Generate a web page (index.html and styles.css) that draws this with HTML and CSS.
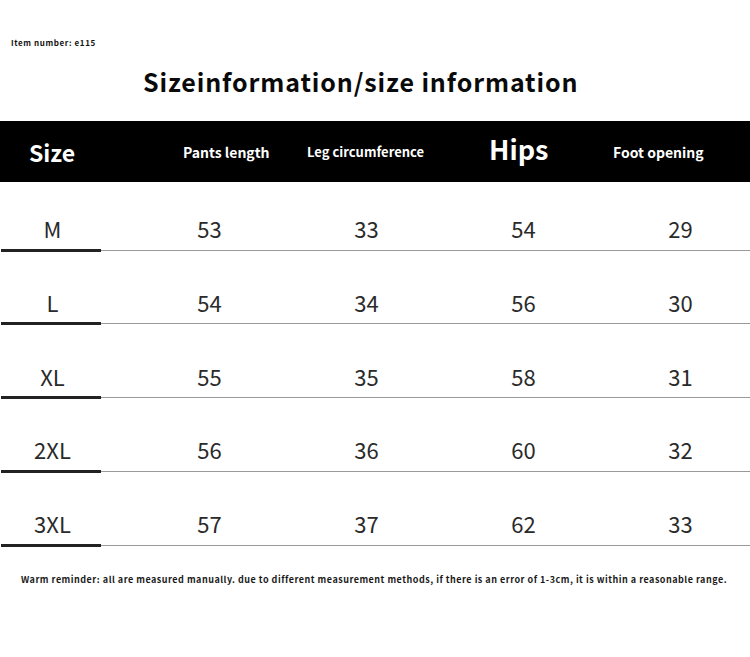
FILE: index.html
```html
<!DOCTYPE html>
<html lang="en">
<head>
<meta charset="utf-8">
<title>Size information</title>
<link rel="stylesheet" href="styles.css">
</head>
<body>
<div class="page">
  <div class="item">Item number: e115</div>
  <h1 class="title">Sizeinformation/size information</h1>
  <div class="band">
    <div class="hcell h-size">Size</div>
    <div class="hcell h-pants">Pants length</div>
    <div class="hcell h-leg">Leg circumference</div>
    <div class="hcell h-hips">Hips</div>
    <div class="hcell h-foot">Foot opening</div>
  </div>
  <div class="rows">
    <div class="row">
      <div class="cells"><span class="c c1">M</span><span class="c">53</span><span class="c">33</span><span class="c">54</span><span class="c">29</span></div>
      <div class="rule"><span class="thick"></span><span class="thin"></span></div>
    </div>
    <div class="row">
      <div class="cells"><span class="c c1">L</span><span class="c">54</span><span class="c">34</span><span class="c">56</span><span class="c">30</span></div>
      <div class="rule"><span class="thick"></span><span class="thin"></span></div>
    </div>
    <div class="row">
      <div class="cells"><span class="c c1">XL</span><span class="c">55</span><span class="c">35</span><span class="c">58</span><span class="c">31</span></div>
      <div class="rule"><span class="thick"></span><span class="thin"></span></div>
    </div>
    <div class="row">
      <div class="cells"><span class="c c1">2XL</span><span class="c">56</span><span class="c">36</span><span class="c">60</span><span class="c">32</span></div>
      <div class="rule"><span class="thick"></span><span class="thin"></span></div>
    </div>
    <div class="row">
      <div class="cells"><span class="c c1">3XL</span><span class="c">57</span><span class="c">37</span><span class="c">62</span><span class="c">33</span></div>
      <div class="rule"><span class="thick"></span><span class="thin"></span></div>
    </div>
  </div>
  <p class="note">Warm reminder: all are measured manually. due to different measurement methods, if there is an error of 1-3cm, it is within a reasonable range.</p>
</div>
</body>
</html>
```

FILE: styles.css
```css
* { box-sizing: border-box; }
html, body { margin: 0; padding: 0; background: #fff; }
body {
  font-family: "Noto Sans CJK SC", "Noto Sans", sans-serif;
  color: #111;
}
.page { width: 750px; }

.item {
  margin: 37px 0 0 11px;
  height: 12px;
  line-height: 12px;
  font-size: 8px;
  letter-spacing: 0.6px;
  font-weight: 700;
  color: #111;
}

.title {
  margin: 15px 0 0 143px;
  height: 34px;
  line-height: 34px;
  font-size: 25px;
  letter-spacing: 0.88px;
  font-weight: 700;
  color: #0a0a0a;
  white-space: nowrap;
}

.band {
  margin-top: 23px;
  height: 61px;
  background: #000;
  color: #fff;
  display: flex;
  align-items: center;
  padding-left: 29px;
  font-weight: 700;
}
.hcell { white-space: nowrap; line-height: 30px; }
.h-size { width: 154px; font-size: 23px; }
.h-pants { width: 124px; font-size: 14px; }
.h-leg { width: 182px; font-size: 13px; }
.h-hips { width: 124px; font-size: 27px; margin-bottom: 5px; }
.h-foot { font-size: 14px; }

.row { padding-top: 35.25px; }
.row:first-child { padding-top: 31px; }

.cells {
  display: grid;
  grid-template-columns: 131px repeat(4, 157px);
  height: 30px;
  line-height: 30px;
  font-size: 22px;
  color: #2a2a2a;
  margin-bottom: 5.5px;
}
.c { text-align: center; }
.c1 { padding-right: 26px; }

.rule {
  display: flex;
  align-items: center;
  height: 3px;
}
.thick {
  width: 100px;
  height: 3px;
  margin-left: 1px;
  background: #222;
}
.thin {
  flex: 1;
  height: 1px;
  background: #999;
}

.note {
  margin: 27px 0 0 21px;
  font-size: 9px;
  line-height: 12px;
  letter-spacing: 0.5px;
  font-weight: 700;
  color: #1a1a1a;
  white-space: nowrap;
}
```
